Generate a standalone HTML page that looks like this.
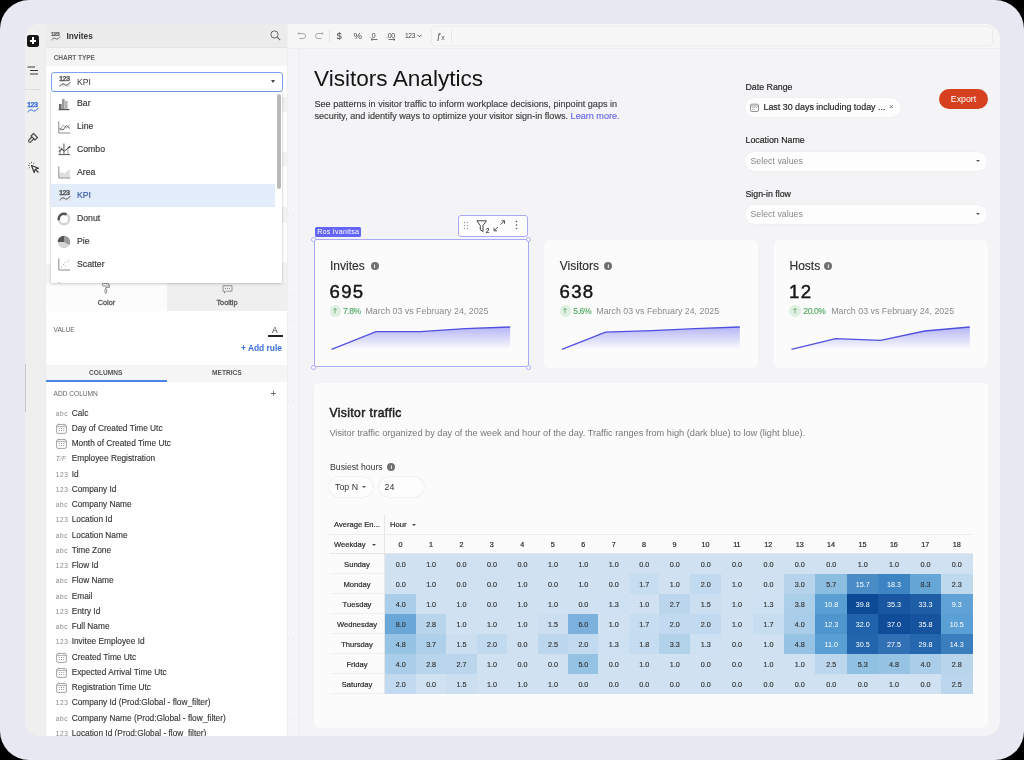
<!DOCTYPE html>
<html><head><meta charset="utf-8">
<style>
*{box-sizing:border-box;margin:0;padding:0}
html,body{width:1024px;height:760px;overflow:hidden;background:#000;font-family:"Liberation Sans",sans-serif}
.abs{position:absolute}
#outer{position:absolute;left:0;top:0;width:1024px;height:760px;background:#e8e8f3;border-radius:29px;overflow:hidden;will-change:transform}
#frame{position:absolute;left:25px;top:24px;width:975px;height:712px;border-radius:15px;overflow:hidden;background:#f4f4f7}
#inner{position:absolute;left:0;top:1px;width:975px;height:711px}
#rail{position:absolute;left:0;top:0;width:21px;height:711px;background:#efefef;border-right:1px solid #ececec}
#panel{position:absolute;left:21px;top:0;width:242px;height:711px;background:#fefefe;border-right:1px solid #efefef}
#ruler{position:absolute;left:263px;top:22px;width:11px;height:689px;background:#f5f5f7;border-right:1px solid #eeeef0;background-image:radial-gradient(circle at 5.6px 50%, #d8d8dc 0.6px, transparent 0.9px);background-size:11px 26.5px;background-position:0 -4px}
#toolbar{position:absolute;left:263px;top:0;width:712px;height:23.5px;background:#f6f6f6;border-bottom:1.5px solid #eeeeee}
.t{position:absolute;white-space:nowrap}
.sb{font-size:8.2px;color:#3a3a3a}
.ddi{position:absolute;left:0;width:231px;height:23px}
.ddi .ic{position:absolute;left:7px;top:6px;width:12px;height:11px}
.ddi .lb{position:absolute;left:26px;top:0;line-height:23px;font-size:8.7px;color:#333;-webkit-text-stroke:0.15px #333}
.colrow{position:absolute;left:9.7px;width:230px;height:15px;margin-top:0.8px}
.colrow .ci{position:absolute;left:0;top:2px;width:14px;height:11px;text-align:left;font-size:6.6px;line-height:11px}
.colrow .ct{font-size:6.6px;color:#8a8a8a;line-height:11px;letter-spacing:0.6px}
.colrow .cn{position:absolute;left:16px;top:0;line-height:15px;font-size:8.3px;color:#333;white-space:nowrap;-webkit-text-stroke:0.12px #333}
.card{position:absolute;background:#fbfbfc;border-radius:5px}
.kt{position:absolute;font-size:12px;color:#2e2e2e;-webkit-text-stroke:0.15px #2e2e2e}
.kv{position:absolute;font-size:18.6px;color:#151515;letter-spacing:1.3px;-webkit-text-stroke:0.45px #151515}
.kd{position:absolute;font-size:8.85px;color:#8a8a8a;white-space:nowrap}
.kp{position:absolute;font-size:8.6px;color:#52ab62;white-space:nowrap;letter-spacing:-0.45px;-webkit-text-stroke:0.15px #52ab62}
.up{position:absolute;width:11.5px;height:11.5px;border-radius:50%;background:#dff0e2}
.info{position:absolute;width:8px;height:8px;border-radius:50%;background:#707070;color:#fff;font-size:6px;line-height:8px;text-align:center;font-weight:bold}
.flabel{position:absolute;font-size:8.8px;color:#2a2a2a;white-space:nowrap;-webkit-text-stroke:0.2px #2a2a2a}
.fsel{position:absolute;background:#fdfdfd;border-radius:10px;box-shadow:0 0 0 0.6px #ececf0}
.cell{position:absolute;text-align:center;font-size:7.2px;-webkit-text-stroke:0.15px currentColor}
.rlab{position:absolute;left:330px;width:54px;text-align:center;font-size:7.6px;color:#2a2a2a;border-bottom:1px solid #f0f0f0;-webkit-text-stroke:0.2px #2a2a2a}
.hr{position:absolute;top:536px;height:18px;line-height:18px;text-align:center;font-size:7.2px;color:#2a2a2a;-webkit-text-stroke:0.2px #2a2a2a}
</style></head><body>
<div id="outer">
<div id="frame">
<div class="abs" style="left:0;top:0;width:21px;height:1px;background:#efefef"></div><div class="abs" style="left:21px;top:0;width:242px;height:1px;background:#ececec"></div><div class="abs" style="left:263px;top:0;width:712px;height:1px;background:#f6f6f6"></div>
<div id="inner">
  <!-- left rail -->
  <div id="rail">
    <div class="abs" style="left:2px;top:10px;width:12px;height:11.5px;background:#161616;border-radius:2.5px"></div>
    <div class="abs" style="left:4.6px;top:15px;width:6.8px;height:1.6px;background:#fff"></div>
    <div class="abs" style="left:7.2px;top:12.4px;width:1.6px;height:6.8px;background:#fff"></div>
    <svg class="abs" style="left:2px;top:41px" width="12" height="10" viewBox="0 0 12 10"><g stroke="#3a3a3a" stroke-width="1"><line x1="0.5" y1="1" x2="8" y2="1"/><line x1="3" y1="4.5" x2="11" y2="4.5"/><line x1="3" y1="8" x2="11" y2="8"/></g></svg>
    <div class="abs" style="left:0;top:64px;width:15px;height:1px;background:#dcdcdc"></div>
    <svg class="abs" style="left:2px;top:76px" width="12.0" height="12.0" viewBox="0 0 12 12"><text x="0" y="6.2" font-family="Liberation Sans" font-weight="bold" font-size="7.3" letter-spacing="-0.6" stroke-width="0.25" stroke="#3b6fe0" fill="#3b6fe0">123</text><path d="M0.5 11.2 Q2.3 9 4 8.8 Q5.2 8.8 6.5 10 Q8.5 11 11.4 7" fill="none" stroke="#3b6fe0" stroke-width="1"/></svg>
    
    <svg class="abs" style="left:2px;top:107px" width="12" height="12" viewBox="0 0 12 12"><g fill="none" stroke="#444" stroke-width="1.1"><path d="M6.5 1.5 L10.5 5.5 L8 8 L4 4 Z"/><path d="M5 5 L2 8 a1.2 1.2 0 0 0 1.8 1.8 L6.8 7"/></g></svg>
    <svg class="abs" style="left:2px;top:136px" width="13" height="13" viewBox="0 0 13 13"><g fill="none" stroke="#333" stroke-width="1.1"><path d="M4.5 4.5 L11.5 7.2 L8.3 8.3 L7.2 11.5 Z" stroke-linejoin="round"/><line x1="8.3" y1="8.3" x2="11.5" y2="11.5"/></g><g stroke="#555" stroke-width="0.8"><line x1="1" y1="4.5" x2="2.6" y2="4.5"/><line x1="4.5" y1="0.8" x2="4.5" y2="2.4"/><line x1="1.8" y1="1.8" x2="2.9" y2="2.9"/><line x1="7.2" y1="1.8" x2="6.3" y2="2.9"/><line x1="1.8" y1="7.2" x2="2.9" y2="6.3"/></g></svg>
  </div>

  <!-- side panel -->
  <div id="panel">
    <div class="abs" style="left:0;top:0;width:241px;height:23px;background:#ececec;border-bottom:1px solid #e4e4e4"></div>
    <svg class="abs" style="left:5.3px;top:6px" width="9.6" height="9.6" viewBox="0 0 12 12"><path d="M0.5 11.2 Q2.3 9 4 8.8 Q5.2 8.8 6.5 10 Q8.5 11 11.4 7 V12 H0.5 Z" fill="#e4e4e4"/><text x="0" y="6.2" font-family="Liberation Sans" font-weight="bold" font-size="7.3" letter-spacing="-0.6" stroke-width="0.25" stroke="#555" fill="#555">123</text><path d="M0.5 11.2 Q2.3 9 4 8.8 Q5.2 8.8 6.5 10 Q8.5 11 11.4 7" fill="none" stroke="#555" stroke-width="1"/></svg>
    
    <div class="t" style="left:20.5px;top:5.6px;font-size:8.3px;font-weight:bold;color:#333;line-height:10px">Invites</div>
    <svg class="abs" style="left:224px;top:5px" width="11" height="11" viewBox="0 0 11 11"><circle cx="4.5" cy="4.5" r="3.6" fill="none" stroke="#666" stroke-width="1"/><line x1="7.2" y1="7.2" x2="10.2" y2="10.2" stroke="#666" stroke-width="1.1"/></svg>
    <div class="abs" style="left:0;top:23px;width:241px;height:18px;background:#f5f5f5"></div>
    <div class="t" style="left:7.7px;top:29px;font-size:6.6px;font-weight:bold;color:#666;line-height:8px;letter-spacing:-0.1px">CHART TYPE</div>
    <!-- underlying strips visible at right edge -->
    <div class="abs" style="left:236px;top:72px;width:5px;height:15px;background:#f2f2f2"></div>
    <div class="abs" style="left:236px;top:127px;width:5px;height:14px;background:#f2f2f2"></div>
    <div class="abs" style="left:236px;top:182px;width:5px;height:16px;background:#f2f2f2"></div>
    <div class="abs" style="left:236px;top:237px;width:5px;height:22px;background:#f2f2f2"></div>
    <div class="abs" style="left:0;top:239px;width:5px;height:19px;background:#f3f3f3"></div>

    <!-- Color / Tooltip tabs -->
    <div class="abs" style="left:0;top:258px;width:121px;height:28px;background:#fcfcfc"></div>
    <div class="abs" style="left:121px;top:258px;width:120px;height:28px;background:#efefef"></div>
    <svg class="abs" style="left:56px;top:258px" width="8" height="11" viewBox="0 0 8 11"><g fill="none" stroke="#888" stroke-width="0.9"><rect x="0.5" y="0.5" width="6" height="2.5" rx="0.6"/><path d="M6.5 1.8 H7.4 V4.5 H3.8 V6"/><rect x="3" y="6" width="1.6" height="4.2" rx="0.5"/></g></svg>
    <div class="t" style="left:0px;width:121px;text-align:center;top:273px;font-size:7.3px;color:#555;line-height:9px;-webkit-text-stroke:0.3px #555">Color</div>
    <svg class="abs" style="left:176px;top:260px" width="11" height="9" viewBox="0 0 11 9"><g fill="none" stroke="#888" stroke-width="0.9"><path d="M1 0.8 H10 V6.2 H4.5 L2.5 8 V6.2 H1 Z" stroke-linejoin="round"/></g><g fill="#888"><rect x="3" y="3" width="1" height="1"/><rect x="5" y="3" width="1" height="1"/><rect x="7" y="3" width="1" height="1"/></g></svg>
    <div class="t" style="left:121px;width:120px;text-align:center;top:273px;font-size:7.3px;color:#555;line-height:9px;-webkit-text-stroke:0.3px #555">Tooltip</div>

    <div class="t" style="left:7.5px;top:300.5px;font-size:6.6px;color:#666;line-height:8px">VALUE</div>
    <div class="t" style="left:226px;top:299.5px;font-size:8.5px;color:#333;line-height:10px">A</div>
    <div class="abs" style="left:222px;top:310.3px;width:15px;height:1.3px;background:#222"></div>
    <div class="t" style="left:195px;top:317px;font-size:8.4px;font-weight:bold;color:#3a70e0;line-height:12px">+ Add rule</div>

    <!-- columns / metrics -->
    <div class="abs" style="left:0;top:340px;width:241px;height:17px;background:#f5f5f5"></div>
    <div class="abs" style="left:0;top:355px;width:121px;height:1.5px;background:#4a84ea"></div>
    <div class="t" style="left:43px;top:344px;font-size:6.6px;font-weight:bold;color:#555;line-height:8px">COLUMNS</div>
    <div class="t" style="left:166px;top:344px;font-size:6.6px;font-weight:bold;color:#555;line-height:8px">METRICS</div>
    <div class="t" style="left:7.5px;top:365px;font-size:6.6px;color:#666;line-height:8px">ADD COLUMN</div>
    <div class="t" style="left:224.5px;top:364.3px;font-size:10px;color:#666;line-height:10px">+</div>
    <div class="abs" style="left:0;top:-25px;width:241px">
<div class="colrow" style="top:404.80px"><div class="ci"><span class="ct">abc</span></div><div class="cn">Calc</div></div>
<div class="colrow" style="top:420.05px"><div class="ci"><svg width="11" height="11" viewBox="0 0 11 11"><rect x="0.6" y="1.6" width="9.8" height="8.8" rx="1.5" fill="none" stroke="#9a9a9a" stroke-width="0.9"/><line x1="0.6" y1="3.6" x2="10.4" y2="3.6" stroke="#9a9a9a" stroke-width="0.8"/><line x1="3" y1="0.5" x2="3" y2="2.2" stroke="#9a9a9a" stroke-width="0.8"/><line x1="8" y1="0.5" x2="8" y2="2.2" stroke="#9a9a9a" stroke-width="0.8"/><g fill="#9a9a9a"><rect x="2.8" y="5" width="1" height="1"/><rect x="5" y="5" width="1" height="1"/><rect x="7.2" y="5" width="1" height="1"/><rect x="2.8" y="7" width="1" height="1"/><rect x="5" y="7" width="1" height="1"/><rect x="7.2" y="7" width="1" height="1"/></g></svg></div><div class="cn">Day of Created Time Utc</div></div>
<div class="colrow" style="top:435.30px"><div class="ci"><svg width="11" height="11" viewBox="0 0 11 11"><rect x="0.6" y="1.6" width="9.8" height="8.8" rx="1.5" fill="none" stroke="#9a9a9a" stroke-width="0.9"/><line x1="0.6" y1="3.6" x2="10.4" y2="3.6" stroke="#9a9a9a" stroke-width="0.8"/><line x1="3" y1="0.5" x2="3" y2="2.2" stroke="#9a9a9a" stroke-width="0.8"/><line x1="8" y1="0.5" x2="8" y2="2.2" stroke="#9a9a9a" stroke-width="0.8"/><g fill="#9a9a9a"><rect x="2.8" y="5" width="1" height="1"/><rect x="5" y="5" width="1" height="1"/><rect x="7.2" y="5" width="1" height="1"/><rect x="2.8" y="7" width="1" height="1"/><rect x="5" y="7" width="1" height="1"/><rect x="7.2" y="7" width="1" height="1"/></g></svg></div><div class="cn">Month of Created Time Utc</div></div>
<div class="colrow" style="top:450.55px"><div class="ci"><span class="ct" style="font-style:italic">T⁄F</span></div><div class="cn">Employee Registration</div></div>
<div class="colrow" style="top:465.80px"><div class="ci"><span class="ct">123</span></div><div class="cn">Id</div></div>
<div class="colrow" style="top:481.05px"><div class="ci"><span class="ct">123</span></div><div class="cn">Company Id</div></div>
<div class="colrow" style="top:496.30px"><div class="ci"><span class="ct">abc</span></div><div class="cn">Company Name</div></div>
<div class="colrow" style="top:511.55px"><div class="ci"><span class="ct">123</span></div><div class="cn">Location Id</div></div>
<div class="colrow" style="top:526.80px"><div class="ci"><span class="ct">abc</span></div><div class="cn">Location Name</div></div>
<div class="colrow" style="top:542.05px"><div class="ci"><span class="ct">abc</span></div><div class="cn">Time Zone</div></div>
<div class="colrow" style="top:557.30px"><div class="ci"><span class="ct">123</span></div><div class="cn">Flow Id</div></div>
<div class="colrow" style="top:572.55px"><div class="ci"><span class="ct">abc</span></div><div class="cn">Flow Name</div></div>
<div class="colrow" style="top:587.80px"><div class="ci"><span class="ct">abc</span></div><div class="cn">Email</div></div>
<div class="colrow" style="top:603.05px"><div class="ci"><span class="ct">123</span></div><div class="cn">Entry Id</div></div>
<div class="colrow" style="top:618.30px"><div class="ci"><span class="ct">abc</span></div><div class="cn">Full Name</div></div>
<div class="colrow" style="top:633.55px"><div class="ci"><span class="ct">123</span></div><div class="cn">Invitee Employee Id</div></div>
<div class="colrow" style="top:648.80px"><div class="ci"><svg width="11" height="11" viewBox="0 0 11 11"><rect x="0.6" y="1.6" width="9.8" height="8.8" rx="1.5" fill="none" stroke="#9a9a9a" stroke-width="0.9"/><line x1="0.6" y1="3.6" x2="10.4" y2="3.6" stroke="#9a9a9a" stroke-width="0.8"/><line x1="3" y1="0.5" x2="3" y2="2.2" stroke="#9a9a9a" stroke-width="0.8"/><line x1="8" y1="0.5" x2="8" y2="2.2" stroke="#9a9a9a" stroke-width="0.8"/><g fill="#9a9a9a"><rect x="2.8" y="5" width="1" height="1"/><rect x="5" y="5" width="1" height="1"/><rect x="7.2" y="5" width="1" height="1"/><rect x="2.8" y="7" width="1" height="1"/><rect x="5" y="7" width="1" height="1"/><rect x="7.2" y="7" width="1" height="1"/></g></svg></div><div class="cn">Created Time Utc</div></div>
<div class="colrow" style="top:664.05px"><div class="ci"><svg width="11" height="11" viewBox="0 0 11 11"><rect x="0.6" y="1.6" width="9.8" height="8.8" rx="1.5" fill="none" stroke="#9a9a9a" stroke-width="0.9"/><line x1="0.6" y1="3.6" x2="10.4" y2="3.6" stroke="#9a9a9a" stroke-width="0.8"/><line x1="3" y1="0.5" x2="3" y2="2.2" stroke="#9a9a9a" stroke-width="0.8"/><line x1="8" y1="0.5" x2="8" y2="2.2" stroke="#9a9a9a" stroke-width="0.8"/><g fill="#9a9a9a"><rect x="2.8" y="5" width="1" height="1"/><rect x="5" y="5" width="1" height="1"/><rect x="7.2" y="5" width="1" height="1"/><rect x="2.8" y="7" width="1" height="1"/><rect x="5" y="7" width="1" height="1"/><rect x="7.2" y="7" width="1" height="1"/></g></svg></div><div class="cn">Expected Arrival Time Utc</div></div>
<div class="colrow" style="top:679.30px"><div class="ci"><svg width="11" height="11" viewBox="0 0 11 11"><rect x="0.6" y="1.6" width="9.8" height="8.8" rx="1.5" fill="none" stroke="#9a9a9a" stroke-width="0.9"/><line x1="0.6" y1="3.6" x2="10.4" y2="3.6" stroke="#9a9a9a" stroke-width="0.8"/><line x1="3" y1="0.5" x2="3" y2="2.2" stroke="#9a9a9a" stroke-width="0.8"/><line x1="8" y1="0.5" x2="8" y2="2.2" stroke="#9a9a9a" stroke-width="0.8"/><g fill="#9a9a9a"><rect x="2.8" y="5" width="1" height="1"/><rect x="5" y="5" width="1" height="1"/><rect x="7.2" y="5" width="1" height="1"/><rect x="2.8" y="7" width="1" height="1"/><rect x="5" y="7" width="1" height="1"/><rect x="7.2" y="7" width="1" height="1"/></g></svg></div><div class="cn">Registration Time Utc</div></div>
<div class="colrow" style="top:694.55px"><div class="ci"><span class="ct">123</span></div><div class="cn">Company Id (Prod:Global - flow_filter)</div></div>
<div class="colrow" style="top:709.80px"><div class="ci"><span class="ct">abc</span></div><div class="cn">Company Name (Prod:Global - flow_filter)</div></div>
<div class="colrow" style="top:725.05px"><div class="ci"><span class="ct">123</span></div><div class="cn">Location Id (Prod:Global - flow_filter)</div></div>
    </div>
  </div>

  <!-- select and dropdown (panel coords: offset 46,25) -->
  <div class="abs" style="left:26px;top:47px;width:232px;height:20px;border:1.2px solid #7aa3ee;border-radius:3px;background:#fff"></div>
  <svg class="abs" style="left:33.5px;top:50px" width="12.0" height="12.0" viewBox="0 0 12 12"><path d="M0.5 11.2 Q2.3 9 4 8.8 Q5.2 8.8 6.5 10 Q8.5 11 11.4 7 V12 H0.5 Z" fill="#e4e4e4"/><text x="0" y="6.2" font-family="Liberation Sans" font-weight="bold" font-size="7.3" letter-spacing="-0.6" stroke-width="0.25" stroke="#555" fill="#555">123</text><path d="M0.5 11.2 Q2.3 9 4 8.8 Q5.2 8.8 6.5 10 Q8.5 11 11.4 7" fill="none" stroke="#555" stroke-width="1"/></svg>
  
  <div class="t" style="left:52px;top:51px;font-size:8.6px;color:#333;line-height:12px">KPI</div>
  <div class="abs" style="left:246px;top:55px;width:0;height:0;border-left:2.8px solid transparent;border-right:2.8px solid transparent;border-top:3px solid #444"></div>

  <div class="abs" style="left:26px;top:67px;width:231px;height:191px;background:#fff;box-shadow:0 1px 3px rgba(0,0,0,0.18), 0 0 0 0.5px rgba(0,0,0,0.06);overflow:hidden">
    <div class="abs" style="left:225.5px;top:1.5px;width:4px;height:95px;border-radius:2px;background:#b9b9b9"></div>
    <div class="ddi" style="top:0px"><svg class="abs" style="left:7px;top:5.5px" width="13" height="13" viewBox="0 0 13 13"><rect x="1" y="6" width="2.6" height="5.6" fill="#6a6a6a"/><rect x="4" y="1" width="2.6" height="10.6" fill="#9a9a9a"/><rect x="7" y="3" width="2.6" height="8.6" fill="#b5b5b5"/><rect x="0.5" y="11" width="11" height="1.2" fill="#555"/></svg><div class="lb">Bar</div></div>
    <div class="ddi" style="top:23px"><svg class="abs" style="left:7px;top:5.5px" width="13" height="13" viewBox="0 0 13 13"><path d="M0.8 0.5 V12 H12.3" fill="none" stroke="#8a8a8a" stroke-width="1"/><path d="M1.5 10 L5 4 L8.5 7 L12 3.5" fill="none" stroke="#aaa" stroke-width="0.9"/><path d="M1.5 7.5 L5 9 L8.5 4.5 L12 7.5" fill="none" stroke="#555" stroke-width="0.9"/></svg><div class="lb">Line</div></div>
    <div class="ddi" style="top:46px"><svg class="abs" style="left:7px;top:5px" width="13" height="13" viewBox="0 0 13 13"><rect x="5" y="0.5" width="1.7" height="10.5" fill="#9a9a9a"/><rect x="1.2" y="6.5" width="1.6" height="4.5" fill="#b0b0b0"/><rect x="9" y="4" width="1.6" height="7" fill="#c0c0c0"/><path d="M0.8 9 L3.5 6.2 L6.5 8 L11.5 4" fill="none" stroke="#444" stroke-width="1"/><circle cx="3.5" cy="6.2" r="1" fill="#444"/><circle cx="11.5" cy="4" r="1" fill="#444"/><circle cx="1.5" cy="4.5" r="0.9" fill="#777"/><rect x="0.5" y="11" width="11.5" height="1.1" fill="#666"/></svg><div class="lb">Combo</div></div>
    <div class="ddi" style="top:69px"><svg class="abs" style="left:7px;top:5px" width="13" height="13" viewBox="0 0 13 13"><path d="M1.5 11.3 V7.5 L4 6 L6.5 7.5 L9.5 4.5 L11.8 4 V11.3 Z" fill="#dedede"/><path d="M0.8 0.5 V12 H12.3" fill="none" stroke="#8a8a8a" stroke-width="1"/></svg><div class="lb">Area</div></div>
    <div class="abs" style="left:0;top:92px;width:224px;height:23px;background:#e3ecfb"></div>
    <div class="ddi" style="top:92px"><svg class="abs" style="left:7.5px;top:5px" width="12.0" height="12.0" viewBox="0 0 12 12"><path d="M0.5 11.2 Q2.3 9 4 8.8 Q5.2 8.8 6.5 10 Q8.5 11 11.4 7 V12 H0.5 Z" fill="#e4e4e4"/><text x="0" y="6.2" font-family="Liberation Sans" font-weight="bold" font-size="7.3" letter-spacing="-0.6" stroke-width="0.25" stroke="#555" fill="#555">123</text><path d="M0.5 11.2 Q2.3 9 4 8.8 Q5.2 8.8 6.5 10 Q8.5 11 11.4 7" fill="none" stroke="#555" stroke-width="1"/></svg><div class="lb" style="color:#3a70e0">KPI</div></div>
    <div class="ddi" style="top:115px"><svg class="abs" style="left:5.5px;top:4.5px" width="14" height="14" viewBox="0 0 14 14"><circle cx="7" cy="7" r="5.2" fill="none" stroke="#d2d2d2" stroke-width="2.4"/><path d="M9.6 2.5 A5.2 5.2 0 0 0 1.9 8.2" fill="none" stroke="#555" stroke-width="2.4"/></svg><div class="lb">Donut</div></div>
    <div class="ddi" style="top:138px"><svg class="abs" style="left:5.5px;top:4.5px" width="14" height="14" viewBox="0 0 14 14"><circle cx="7" cy="7" r="6.2" fill="#d6d6d6"/><path d="M7 7 L7 0.8 A6.2 6.2 0 0 0 0.8 7 Z" fill="#555"/><path d="M7 7 L7 0.8 A6.2 6.2 0 0 1 12.4 10 Z" fill="#9a9a9a"/></svg><div class="lb">Pie</div></div>
    <div class="ddi" style="top:161px"><svg class="abs" style="left:7px;top:5px" width="13" height="13" viewBox="0 0 13 13"><path d="M0.8 0.5 V12 H12.3" fill="none" stroke="#8a8a8a" stroke-width="1"/><g fill="#aaa"><circle cx="3.5" cy="9" r="0.55"/><circle cx="5.5" cy="6.5" r="0.55"/><circle cx="7.5" cy="7.8" r="0.55"/><circle cx="9.5" cy="3.8" r="0.55"/><circle cx="11" cy="2" r="0.55"/><circle cx="6.8" cy="4.5" r="0.55"/></g></svg><div class="lb">Scatter</div></div>
    <div class="ddi" style="top:184px"><svg class="ic" viewBox="0 0 12 12"><path d="M0.5 0 V11.3" fill="none" stroke="#888" stroke-width="0.9"/><rect x="5" y="2" width="1" height="1" fill="#999"/></svg></div>
  </div>

  <!-- ruler dots -->
  <div class="abs" style="left:-0.5px;top:338.5px;width:1.3px;height:48.5px;background:#c9c9c9;border-radius:1px"></div>
  <div id="ruler"></div>

  <!-- toolbar -->
  <div id="toolbar">
    <svg class="abs" style="left:9px;top:7px" width="9" height="7" viewBox="0 0 9 7"><path d="M2 1.5 H6 A2.5 2.5 0 0 1 6 6.5 H2.5" fill="none" stroke="#aaa" stroke-width="1"/><path d="M0.3 1.5 L2.3 0 V3 Z" fill="#aaa"/></svg>
    <svg class="abs" style="left:27px;top:7px" width="9" height="7" viewBox="0 0 9 7"><path d="M7 1.5 H3 A2.5 2.5 0 0 0 3 6.5 H6.5" fill="none" stroke="#aaa" stroke-width="1"/><path d="M8.7 1.5 L6.7 0 V3 Z" fill="#aaa"/></svg>
    <div class="abs" style="left:41px;top:5px;width:1px;height:12px;background:#e3e3e3"></div>
    <div class="t" style="left:48.5px;top:5px;font-size:9.5px;color:#444;line-height:12px">$</div>
    <div class="t" style="left:65.5px;top:5px;font-size:9.5px;color:#444;line-height:12px">%</div>
    <div class="t" style="left:82px;top:5.5px;font-size:7px;color:#444;line-height:10px;letter-spacing:-0.3px">.0</div>
    <svg class="abs" style="left:82px;top:13px" width="8" height="3" viewBox="0 0 8 3"><path d="M1 1.5 H7.5 M1 1.5 L2.5 0.3 M1 1.5 L2.5 2.7" stroke="#555" stroke-width="0.8" fill="none"/></svg>
    <div class="t" style="left:98px;top:5.5px;font-size:7px;color:#444;line-height:10px;letter-spacing:-0.3px">.00</div>
    <svg class="abs" style="left:100px;top:13px" width="8" height="3" viewBox="0 0 8 3"><path d="M0.5 1.5 H7 M7 1.5 L5.5 0.3 M7 1.5 L5.5 2.7" stroke="#555" stroke-width="0.8" fill="none"/></svg>
    <div class="t" style="left:117px;top:6px;font-size:6.6px;color:#444;line-height:9px;letter-spacing:-0.3px">123</div>
    <svg class="abs" style="left:129px;top:9px" width="5" height="4" viewBox="0 0 5 4"><path d="M0.5 0.8 L2.5 2.8 L4.5 0.8" stroke="#444" stroke-width="0.9" fill="none"/></svg>
    <div class="abs" style="left:142.5px;top:0.5px;width:562.5px;height:20px;border:1px solid #ececec;border-radius:4px;background:#f7f7f7"></div>
    <div class="t" style="left:148.5px;top:5px;font-size:9.5px;color:#555;line-height:12px">ƒ</div>
    <div class="t" style="left:153.3px;top:9px;font-size:7px;color:#555;line-height:8px">x</div>
    <div class="abs" style="left:163px;top:4px;width:1px;height:14px;background:#e6e6e6"></div>
    
  </div>

  <!-- MAIN CONTENT (frame coords = page - 25) -->
  <div class="t" style="left:289px;top:41px;font-size:22.6px;color:#151515;line-height:26px">Visitors Analytics</div>
  <div class="t" style="left:289.5px;top:72.5px;font-size:9.1px;color:#3d3d3d;line-height:12.5px;-webkit-text-stroke:0.15px #3d3d3d">See patterns in visitor traffic to inform workplace decisions, pinpoint gaps in<br>security, and identify ways to optimize your visitor sign-in flows. <span style="color:#6767ee;-webkit-text-stroke:0.15px #6767ee">Learn more.</span></div>

  <!-- filters -->
  <div class="flabel" style="left:720.5px;top:56.5px;line-height:11px">Date Range</div>
  <div class="fsel" style="left:720px;top:73px;width:156px;height:19px"></div>
  <svg class="abs" style="left:725px;top:77.5px" width="9" height="9" viewBox="0 0 9 9"><rect x="0.5" y="1.2" width="8" height="7.3" rx="1.2" fill="none" stroke="#777" stroke-width="0.8"/><line x1="0.5" y1="3" x2="8.5" y2="3" stroke="#777" stroke-width="0.7"/><g fill="#888"><rect x="2.2" y="4.3" width="0.9" height="0.9"/><rect x="4.1" y="4.3" width="0.9" height="0.9"/><rect x="6" y="4.3" width="0.9" height="0.9"/><rect x="2.2" y="6.2" width="0.9" height="0.9"/><rect x="4.1" y="6.2" width="0.9" height="0.9"/></g></svg>
  <div class="flabel" style="left:738.5px;top:77.3px;line-height:11px;font-size:8.9px">Last 30 days including today ...</div>
  <div class="t" style="left:864px;top:77px;font-size:8px;color:#666;line-height:10px">×</div>
  <div class="abs" style="left:914px;top:64px;width:49px;height:20px;border-radius:10px;background:#d7401f;color:#fff;font-size:8.8px;line-height:20px;text-align:center">Export</div>

  <div class="flabel" style="left:720.5px;top:110px;line-height:11px">Location Name</div>
  <div class="fsel" style="left:720px;top:126.5px;width:242px;height:19px"></div>
  <div class="t" style="left:725.5px;top:130.5px;font-size:8.8px;color:#888;line-height:11px">Select values</div>
  <div class="abs" style="left:951px;top:134.5px;width:0;height:0;border-left:2.5px solid transparent;border-right:2.5px solid transparent;border-top:2.8px solid #555"></div>

  <div class="flabel" style="left:720.5px;top:163.5px;line-height:11px">Sign-in flow</div>
  <div class="fsel" style="left:720px;top:180px;width:242px;height:19px"></div>
  <div class="t" style="left:725.5px;top:184px;font-size:8.8px;color:#888;line-height:11px">Select values</div>
  <div class="abs" style="left:951px;top:188px;width:0;height:0;border-left:2.5px solid transparent;border-right:2.5px solid transparent;border-top:2.8px solid #555"></div>

  <!-- KPI cards -->
  <div class="card" style="left:289px;top:214.5px;width:215px;height:128px"></div>
  <div class="card" style="left:519px;top:214.5px;width:214px;height:128px"></div>
  <div class="card" style="left:748.5px;top:214.5px;width:214.5px;height:128px"></div>

  <!-- Invites card content -->
  <div class="kt" style="left:305px;top:234px;line-height:14px">Invites</div>
  <div class="info" style="left:345.5px;top:237px">i</div>
  <div class="kv" style="left:304.5px;top:256.1px;line-height:22px">695</div>
  <div class="up" style="left:304.5px;top:280px"></div>
  <svg class="abs" style="left:307px;top:282px" width="6" height="7" viewBox="0 0 6 7"><path d="M3 6.3 V1.3 M1.3 3 L3 1.3 L4.7 3" stroke="#55a463" stroke-width="0.8" fill="none"/></svg>
  <div class="kp" style="left:318px;top:280.5px;line-height:10px">7.8%</div>
  <div class="kd" style="left:340.5px;top:280.5px;line-height:10px">March 03 vs February 24, 2025</div>

  <div class="kt" style="left:534.8px;top:234px;line-height:14px">Visitors</div>
  <div class="info" style="left:579.3px;top:237px">i</div>
  <div class="kv" style="left:534.5px;top:256.1px;line-height:22px">638</div>
  <div class="up" style="left:534.5px;top:280px"></div>
  <svg class="abs" style="left:537px;top:282px" width="6" height="7" viewBox="0 0 6 7"><path d="M3 6.3 V1.3 M1.3 3 L3 1.3 L4.7 3" stroke="#55a463" stroke-width="0.8" fill="none"/></svg>
  <div class="kp" style="left:548.3px;top:280.5px;line-height:10px">5.6%</div>
  <div class="kd" style="left:571.3px;top:280.5px;line-height:10px">March 03 vs February 24, 2025</div>

  <div class="kt" style="left:764.5px;top:234px;line-height:14px">Hosts</div>
  <div class="info" style="left:799.4px;top:237px">i</div>
  <div class="kv" style="left:764px;top:256.1px;line-height:22px">12</div>
  <div class="up" style="left:764.2px;top:280px"></div>
  <svg class="abs" style="left:766.7px;top:282px" width="6" height="7" viewBox="0 0 6 7"><path d="M3 6.3 V1.3 M1.3 3 L3 1.3 L4.7 3" stroke="#55a463" stroke-width="0.8" fill="none"/></svg>
  <div class="kp" style="left:778.3px;top:280.5px;line-height:10px">20.0%</div>
  <div class="kd" style="left:806.2px;top:280.5px;line-height:10px">March 03 vs February 24, 2025</div>

  <!-- sparklines (frame coords) -->
  <svg class="abs" style="left:0;top:0" width="975" height="711" viewBox="0 0 975 711">
    <defs><linearGradient id="gr" x1="0" y1="0" x2="0" y2="1"><stop offset="0" stop-color="#7c7cf0" stop-opacity="0.55"/><stop offset="1" stop-color="#7c7cf0" stop-opacity="0"/></linearGradient></defs>
    <path d="M306.6 324.3 L351 306.7 L395.3 306.7 L440.2 303.6 L485.2 302 V324.3 H306.6 Z" fill="url(#gr)"/>
    <path d="M306.6 324.3 L351 306.7 L395.3 306.7 L440.2 303.6 L485.2 302" fill="none" stroke="#5050e0" stroke-width="1.3"/>
    <path d="M536.9 324.3 L580.5 307.1 L626.7 305.6 L670 303.6 L714.8 302 V324.3 H536.9 Z" fill="url(#gr)"/>
    <path d="M536.9 324.3 L580.5 307.1 L626.7 305.6 L670 303.6 L714.8 302" fill="none" stroke="#5050e0" stroke-width="1.3"/>
    <path d="M766.5 324.3 L810.5 313.6 L855.7 315.3 L899.7 306 L944.8 302 V324.3 H766.5 Z" fill="url(#gr)"/>
    <path d="M766.5 324.3 L810.5 313.6 L855.7 315.3 L899.7 306 L944.8 302" fill="none" stroke="#5050e0" stroke-width="1.3"/>
  </svg>

  <!-- selection around Invites -->
  <div class="abs" style="left:288.5px;top:214.2px;width:215.5px;height:128.3px;border:1px solid #a9a9f7"></div>
  <div class="abs" style="left:286.2px;top:212px;width:5px;height:5px;border-radius:50%;background:#fff;border:1px solid #a9a9f7"></div>
  <div class="abs" style="left:501.2px;top:212px;width:5px;height:5px;border-radius:50%;background:#fff;border:1px solid #a9a9f7"></div>
  <div class="abs" style="left:286.2px;top:340px;width:5px;height:5px;border-radius:50%;background:#fff;border:1px solid #a9a9f7"></div>
  <div class="abs" style="left:501.2px;top:340px;width:5px;height:5px;border-radius:50%;background:#fff;border:1px solid #a9a9f7"></div>
  <div class="abs" style="left:289.7px;top:202.3px;width:46px;height:9.7px;background:#6464f6;border-radius:1.5px;color:#fff;font-size:7.1px;line-height:10px;padding-left:2.5px;letter-spacing:0.25px;white-space:nowrap">Ros Ivanitsa</div>
  <div class="abs" style="left:433px;top:190px;width:69.5px;height:21.5px;border:1px solid #a9a9f7;border-radius:3px;background:#fdfdfe"></div>
  <svg class="abs" style="left:438px;top:196px" width="6" height="9" viewBox="0 0 6 9"><g fill="#9a9a9a"><circle cx="1.5" cy="1.5" r="0.7"/><circle cx="4.5" cy="1.5" r="0.7"/><circle cx="1.5" cy="4.5" r="0.7"/><circle cx="4.5" cy="4.5" r="0.7"/><circle cx="1.5" cy="7.5" r="0.7"/><circle cx="4.5" cy="7.5" r="0.7"/></g></svg>
  <svg class="abs" style="left:450.5px;top:195.3px" width="16" height="13" viewBox="0 0 16 13"><path d="M0.8 0.8 H10.5 L7 5.5 V11.5 L4.3 9.8 V5.5 Z" fill="none" stroke="#444" stroke-width="1" stroke-linejoin="round"/><text x="9.8" y="12.5" font-size="6.5" font-family="Liberation Sans" font-weight="bold" fill="#444">2</text></svg>
  <svg class="abs" style="left:468px;top:195px" width="13" height="12" viewBox="0 0 13 12"><g fill="none" stroke="#444" stroke-width="0.9"><path d="M7.5 4.5 L11.5 0.8 M8.5 0.8 H11.5 V3.8"/><path d="M5 7 L1 10.8 M1 7.8 V10.8 H4"/></g></svg>
  <svg class="abs" style="left:490px;top:195px" width="3" height="10" viewBox="0 0 3 10"><g fill="#555"><circle cx="1.5" cy="1.5" r="0.8"/><circle cx="1.5" cy="5" r="0.8"/><circle cx="1.5" cy="8.5" r="0.8"/></g></svg>

  <!-- heatmap card -->
  <div class="card" style="left:289px;top:358px;width:674px;height:345px"></div>
  <div class="t" style="left:304.4px;top:380.5px;font-size:12.1px;color:#222;line-height:14px;letter-spacing:0.42px;-webkit-text-stroke:0.5px #222">Visitor traffic</div>
  <div class="t" style="left:304.4px;top:402.5px;font-size:9.2px;color:#777;line-height:11px">Visitor traffic organized by day of the week and hour of the day. Traffic ranges from high (dark blue) to low (light blue).</div>
  <div class="t" style="left:305px;top:436.5px;font-size:8.7px;color:#333;line-height:11px">Busiest hours</div>
  <div class="info" style="left:362.3px;top:437.8px">i</div>
  <div class="fsel" style="left:304px;top:452px;width:44.4px;height:19.5px"></div>
  <div class="t" style="left:310px;top:456.5px;font-size:8.8px;color:#333;line-height:11px">Top N</div>
  <div class="abs" style="left:336.5px;top:460.5px;width:0;height:0;border-left:2.2px solid transparent;border-right:2.2px solid transparent;border-top:2.5px solid #555"></div>
  <div class="fsel" style="left:353.8px;top:452px;width:45px;height:19.5px"></div>
  <div class="t" style="left:359.5px;top:456.5px;font-size:8.8px;color:#333;line-height:11px">24</div>

  <div class="abs" style="left:-25px;top:-25px;width:1024px;height:760px">
    <!-- table header (page coords) -->
    <div class="abs" style="left:384px;top:515px;width:1.3px;height:179px;background:#e6e6e6"></div>
    <div class="abs" style="left:329px;top:534px;width:644px;height:1px;background:#ededed"></div>
    <div class="abs" style="left:330px;top:553.2px;width:643px;height:1px;background:#e6e6e6"></div>
    <div class="t" style="left:334px;top:519.5px;font-size:7.6px;color:#2a2a2a;line-height:10px;-webkit-text-stroke:0.2px #2a2a2a">Average En...</div>
    <div class="t" style="left:390px;top:519.5px;font-size:7.6px;color:#2a2a2a;line-height:10px;-webkit-text-stroke:0.2px #2a2a2a">Hour</div>
    <div class="abs" style="left:412px;top:523.5px;width:0;height:0;border-left:2.2px solid transparent;border-right:2.2px solid transparent;border-top:2.5px solid #444"></div>
    <div class="t" style="left:334px;top:539.5px;font-size:7.6px;color:#2a2a2a;line-height:10px;-webkit-text-stroke:0.2px #2a2a2a">Weekday</div>
    <div class="abs" style="left:372px;top:543.5px;width:0;height:0;border-left:2.2px solid transparent;border-right:2.2px solid transparent;border-top:2.5px solid #444"></div>
<div class="hr" style="left:385.30px;width:30.45px">0</div>
<div class="hr" style="left:415.75px;width:30.45px">1</div>
<div class="hr" style="left:446.20px;width:30.45px">2</div>
<div class="hr" style="left:476.65px;width:30.45px">3</div>
<div class="hr" style="left:507.10px;width:30.45px">4</div>
<div class="hr" style="left:537.55px;width:30.45px">5</div>
<div class="hr" style="left:568.00px;width:30.45px">6</div>
<div class="hr" style="left:598.45px;width:30.45px">7</div>
<div class="hr" style="left:628.90px;width:30.45px">8</div>
<div class="hr" style="left:659.35px;width:30.45px">9</div>
<div class="hr" style="left:689.80px;width:31.40px">10</div>
<div class="hr" style="left:721.20px;width:31.40px">11</div>
<div class="hr" style="left:752.60px;width:31.40px">12</div>
<div class="hr" style="left:784.00px;width:31.40px">13</div>
<div class="hr" style="left:815.40px;width:31.40px">14</div>
<div class="hr" style="left:846.80px;width:31.40px">15</div>
<div class="hr" style="left:878.20px;width:31.40px">16</div>
<div class="hr" style="left:909.60px;width:31.40px">17</div>
<div class="hr" style="left:941.00px;width:31.40px">18</div>
<div class="rlab" style="top:553.90px;height:20.02px;line-height:21.52px">Sunday</div>
<div class="cell" style="left:385.30px;top:553.90px;width:30.75px;height:20.32px;line-height:21.42px;background:#d0e2f2;color:#333333">0.0</div>
<div class="cell" style="left:415.75px;top:553.90px;width:30.75px;height:20.32px;line-height:21.42px;background:#d0e2f2;color:#333333">1.0</div>
<div class="cell" style="left:446.20px;top:553.90px;width:30.75px;height:20.32px;line-height:21.42px;background:#d0e2f2;color:#333333">0.0</div>
<div class="cell" style="left:476.65px;top:553.90px;width:30.75px;height:20.32px;line-height:21.42px;background:#d0e2f2;color:#333333">0.0</div>
<div class="cell" style="left:507.10px;top:553.90px;width:30.75px;height:20.32px;line-height:21.42px;background:#d0e2f2;color:#333333">0.0</div>
<div class="cell" style="left:537.55px;top:553.90px;width:30.75px;height:20.32px;line-height:21.42px;background:#d0e2f2;color:#333333">1.0</div>
<div class="cell" style="left:568.00px;top:553.90px;width:30.75px;height:20.32px;line-height:21.42px;background:#d0e2f2;color:#333333">1.0</div>
<div class="cell" style="left:598.45px;top:553.90px;width:30.75px;height:20.32px;line-height:21.42px;background:#d0e2f2;color:#333333">1.0</div>
<div class="cell" style="left:628.90px;top:553.90px;width:30.75px;height:20.32px;line-height:21.42px;background:#d0e2f2;color:#333333">0.0</div>
<div class="cell" style="left:659.35px;top:553.90px;width:30.75px;height:20.32px;line-height:21.42px;background:#d0e2f2;color:#333333">0.0</div>
<div class="cell" style="left:689.80px;top:553.90px;width:31.70px;height:20.32px;line-height:21.42px;background:#d0e2f2;color:#333333">0.0</div>
<div class="cell" style="left:721.20px;top:553.90px;width:31.70px;height:20.32px;line-height:21.42px;background:#d0e2f2;color:#333333">0.0</div>
<div class="cell" style="left:752.60px;top:553.90px;width:31.70px;height:20.32px;line-height:21.42px;background:#d0e2f2;color:#333333">0.0</div>
<div class="cell" style="left:784.00px;top:553.90px;width:31.70px;height:20.32px;line-height:21.42px;background:#d0e2f2;color:#333333">0.0</div>
<div class="cell" style="left:815.40px;top:553.90px;width:31.70px;height:20.32px;line-height:21.42px;background:#d0e2f2;color:#333333">0.0</div>
<div class="cell" style="left:846.80px;top:553.90px;width:31.70px;height:20.32px;line-height:21.42px;background:#d0e2f2;color:#333333">1.0</div>
<div class="cell" style="left:878.20px;top:553.90px;width:31.70px;height:20.32px;line-height:21.42px;background:#d0e2f2;color:#333333">1.0</div>
<div class="cell" style="left:909.60px;top:553.90px;width:31.70px;height:20.32px;line-height:21.42px;background:#d0e2f2;color:#333333">0.0</div>
<div class="cell" style="left:941.00px;top:553.90px;width:31.70px;height:20.32px;line-height:21.42px;background:#d0e2f2;color:#333333">0.0</div>
<div class="rlab" style="top:573.92px;height:20.02px;line-height:21.52px">Monday</div>
<div class="cell" style="left:385.30px;top:573.92px;width:30.75px;height:20.32px;line-height:21.42px;background:#d0e2f2;color:#333333">0.0</div>
<div class="cell" style="left:415.75px;top:573.92px;width:30.75px;height:20.32px;line-height:21.42px;background:#d0e2f2;color:#333333">1.0</div>
<div class="cell" style="left:446.20px;top:573.92px;width:30.75px;height:20.32px;line-height:21.42px;background:#d0e2f2;color:#333333">0.0</div>
<div class="cell" style="left:476.65px;top:573.92px;width:30.75px;height:20.32px;line-height:21.42px;background:#d0e2f2;color:#333333">0.0</div>
<div class="cell" style="left:507.10px;top:573.92px;width:30.75px;height:20.32px;line-height:21.42px;background:#d0e2f2;color:#333333">1.0</div>
<div class="cell" style="left:537.55px;top:573.92px;width:30.75px;height:20.32px;line-height:21.42px;background:#d0e2f2;color:#333333">0.0</div>
<div class="cell" style="left:568.00px;top:573.92px;width:30.75px;height:20.32px;line-height:21.42px;background:#d0e2f2;color:#333333">1.0</div>
<div class="cell" style="left:598.45px;top:573.92px;width:30.75px;height:20.32px;line-height:21.42px;background:#d0e2f2;color:#333333">0.0</div>
<div class="cell" style="left:628.90px;top:573.92px;width:30.75px;height:20.32px;line-height:21.42px;background:#c7ddf0;color:#333333">1.7</div>
<div class="cell" style="left:659.35px;top:573.92px;width:30.75px;height:20.32px;line-height:21.42px;background:#d0e2f2;color:#333333">1.0</div>
<div class="cell" style="left:689.80px;top:573.92px;width:31.70px;height:20.32px;line-height:21.42px;background:#c2daef;color:#333333">2.0</div>
<div class="cell" style="left:721.20px;top:573.92px;width:31.70px;height:20.32px;line-height:21.42px;background:#d0e2f2;color:#333333">1.0</div>
<div class="cell" style="left:752.60px;top:573.92px;width:31.70px;height:20.32px;line-height:21.42px;background:#d0e2f2;color:#333333">0.0</div>
<div class="cell" style="left:784.00px;top:573.92px;width:31.70px;height:20.32px;line-height:21.42px;background:#b6d3eb;color:#333333">3.0</div>
<div class="cell" style="left:815.40px;top:573.92px;width:31.70px;height:20.32px;line-height:21.42px;background:#8bbde1;color:#333333">5.7</div>
<div class="cell" style="left:846.80px;top:573.92px;width:31.70px;height:20.32px;line-height:21.42px;background:#4a8cc6;color:#ffffff;-webkit-text-stroke:0">15.7</div>
<div class="cell" style="left:878.20px;top:573.92px;width:31.70px;height:20.32px;line-height:21.42px;background:#3d84c2;color:#ffffff;-webkit-text-stroke:0">18.3</div>
<div class="cell" style="left:909.60px;top:573.92px;width:31.70px;height:20.32px;line-height:21.42px;background:#65a6d6;color:#333333">8.3</div>
<div class="cell" style="left:941.00px;top:573.92px;width:31.70px;height:20.32px;line-height:21.42px;background:#bed8ee;color:#333333">2.3</div>
<div class="rlab" style="top:593.94px;height:20.02px;line-height:21.52px">Tuesday</div>
<div class="cell" style="left:385.30px;top:593.94px;width:30.75px;height:20.32px;line-height:21.42px;background:#aacee9;color:#333333">4.0</div>
<div class="cell" style="left:415.75px;top:593.94px;width:30.75px;height:20.32px;line-height:21.42px;background:#d0e2f2;color:#333333">1.0</div>
<div class="cell" style="left:446.20px;top:593.94px;width:30.75px;height:20.32px;line-height:21.42px;background:#d0e2f2;color:#333333">1.0</div>
<div class="cell" style="left:476.65px;top:593.94px;width:30.75px;height:20.32px;line-height:21.42px;background:#d0e2f2;color:#333333">0.0</div>
<div class="cell" style="left:507.10px;top:593.94px;width:30.75px;height:20.32px;line-height:21.42px;background:#d0e2f2;color:#333333">1.0</div>
<div class="cell" style="left:537.55px;top:593.94px;width:30.75px;height:20.32px;line-height:21.42px;background:#d0e2f2;color:#333333">1.0</div>
<div class="cell" style="left:568.00px;top:593.94px;width:30.75px;height:20.32px;line-height:21.42px;background:#d0e2f2;color:#333333">0.0</div>
<div class="cell" style="left:598.45px;top:593.94px;width:30.75px;height:20.32px;line-height:21.42px;background:#cee1f2;color:#333333">1.3</div>
<div class="cell" style="left:628.90px;top:593.94px;width:30.75px;height:20.32px;line-height:21.42px;background:#d0e2f2;color:#333333">1.0</div>
<div class="cell" style="left:659.35px;top:593.94px;width:30.75px;height:20.32px;line-height:21.42px;background:#bad5ec;color:#333333">2.7</div>
<div class="cell" style="left:689.80px;top:593.94px;width:31.70px;height:20.32px;line-height:21.42px;background:#cbdff1;color:#333333">1.5</div>
<div class="cell" style="left:721.20px;top:593.94px;width:31.70px;height:20.32px;line-height:21.42px;background:#d0e2f2;color:#333333">1.0</div>
<div class="cell" style="left:752.60px;top:593.94px;width:31.70px;height:20.32px;line-height:21.42px;background:#cee1f2;color:#333333">1.3</div>
<div class="cell" style="left:784.00px;top:593.94px;width:31.70px;height:20.32px;line-height:21.42px;background:#accfe9;color:#333333">3.8</div>
<div class="cell" style="left:815.40px;top:593.94px;width:31.70px;height:20.32px;line-height:21.42px;background:#5a9fd3;color:#ffffff;-webkit-text-stroke:0">10.8</div>
<div class="cell" style="left:846.80px;top:593.94px;width:31.70px;height:20.32px;line-height:21.42px;background:#0d4a96;color:#ffffff;-webkit-text-stroke:0">39.8</div>
<div class="cell" style="left:878.20px;top:593.94px;width:31.70px;height:20.32px;line-height:21.42px;background:#1856a1;color:#ffffff;-webkit-text-stroke:0">35.3</div>
<div class="cell" style="left:909.60px;top:593.94px;width:31.70px;height:20.32px;line-height:21.42px;background:#1d5ea7;color:#ffffff;-webkit-text-stroke:0">33.3</div>
<div class="cell" style="left:941.00px;top:593.94px;width:31.70px;height:20.32px;line-height:21.42px;background:#60a2d5;color:#ffffff;-webkit-text-stroke:0">9.3</div>
<div class="rlab" style="top:613.96px;height:20.02px;line-height:21.52px">Wednesday</div>
<div class="cell" style="left:385.30px;top:613.96px;width:30.75px;height:20.32px;line-height:21.42px;background:#68a7d7;color:#333333">8.0</div>
<div class="cell" style="left:415.75px;top:613.96px;width:30.75px;height:20.32px;line-height:21.42px;background:#b8d5ec;color:#333333">2.8</div>
<div class="cell" style="left:446.20px;top:613.96px;width:30.75px;height:20.32px;line-height:21.42px;background:#d0e2f2;color:#333333">1.0</div>
<div class="cell" style="left:476.65px;top:613.96px;width:30.75px;height:20.32px;line-height:21.42px;background:#d0e2f2;color:#333333">1.0</div>
<div class="cell" style="left:507.10px;top:613.96px;width:30.75px;height:20.32px;line-height:21.42px;background:#d0e2f2;color:#333333">1.0</div>
<div class="cell" style="left:537.55px;top:613.96px;width:30.75px;height:20.32px;line-height:21.42px;background:#cbdff1;color:#333333">1.5</div>
<div class="cell" style="left:568.00px;top:613.96px;width:30.75px;height:20.32px;line-height:21.42px;background:#7bb1dc;color:#333333">6.0</div>
<div class="cell" style="left:598.45px;top:613.96px;width:30.75px;height:20.32px;line-height:21.42px;background:#d0e2f2;color:#333333">1.0</div>
<div class="cell" style="left:628.90px;top:613.96px;width:30.75px;height:20.32px;line-height:21.42px;background:#c7ddf0;color:#333333">1.7</div>
<div class="cell" style="left:659.35px;top:613.96px;width:30.75px;height:20.32px;line-height:21.42px;background:#c2daef;color:#333333">2.0</div>
<div class="cell" style="left:689.80px;top:613.96px;width:31.70px;height:20.32px;line-height:21.42px;background:#c2daef;color:#333333">2.0</div>
<div class="cell" style="left:721.20px;top:613.96px;width:31.70px;height:20.32px;line-height:21.42px;background:#d0e2f2;color:#333333">1.0</div>
<div class="cell" style="left:752.60px;top:613.96px;width:31.70px;height:20.32px;line-height:21.42px;background:#c7ddf0;color:#333333">1.7</div>
<div class="cell" style="left:784.00px;top:613.96px;width:31.70px;height:20.32px;line-height:21.42px;background:#aacee9;color:#333333">4.0</div>
<div class="cell" style="left:815.40px;top:613.96px;width:31.70px;height:20.32px;line-height:21.42px;background:#4f95ce;color:#ffffff;-webkit-text-stroke:0">12.3</div>
<div class="cell" style="left:846.80px;top:613.96px;width:31.70px;height:20.32px;line-height:21.42px;background:#2062ab;color:#ffffff;-webkit-text-stroke:0">32.0</div>
<div class="cell" style="left:878.20px;top:613.96px;width:31.70px;height:20.32px;line-height:21.42px;background:#0f4c99;color:#ffffff;-webkit-text-stroke:0">37.0</div>
<div class="cell" style="left:909.60px;top:613.96px;width:31.70px;height:20.32px;line-height:21.42px;background:#16539e;color:#ffffff;-webkit-text-stroke:0">35.8</div>
<div class="cell" style="left:941.00px;top:613.96px;width:31.70px;height:20.32px;line-height:21.42px;background:#5ba0d4;color:#ffffff;-webkit-text-stroke:0">10.5</div>
<div class="rlab" style="top:633.98px;height:20.02px;line-height:21.52px">Thursday</div>
<div class="cell" style="left:385.30px;top:633.98px;width:30.75px;height:20.32px;line-height:21.42px;background:#96c3e4;color:#333333">4.8</div>
<div class="cell" style="left:415.75px;top:633.98px;width:30.75px;height:20.32px;line-height:21.42px;background:#aed0ea;color:#333333">3.7</div>
<div class="cell" style="left:446.20px;top:633.98px;width:30.75px;height:20.32px;line-height:21.42px;background:#cbdff1;color:#333333">1.5</div>
<div class="cell" style="left:476.65px;top:633.98px;width:30.75px;height:20.32px;line-height:21.42px;background:#c2daef;color:#333333">2.0</div>
<div class="cell" style="left:507.10px;top:633.98px;width:30.75px;height:20.32px;line-height:21.42px;background:#d0e2f2;color:#333333">0.0</div>
<div class="cell" style="left:537.55px;top:633.98px;width:30.75px;height:20.32px;line-height:21.42px;background:#bcd7ed;color:#333333">2.5</div>
<div class="cell" style="left:568.00px;top:633.98px;width:30.75px;height:20.32px;line-height:21.42px;background:#c2daef;color:#333333">2.0</div>
<div class="cell" style="left:598.45px;top:633.98px;width:30.75px;height:20.32px;line-height:21.42px;background:#cee1f2;color:#333333">1.3</div>
<div class="cell" style="left:628.90px;top:633.98px;width:30.75px;height:20.32px;line-height:21.42px;background:#c6dcf0;color:#333333">1.8</div>
<div class="cell" style="left:659.35px;top:633.98px;width:30.75px;height:20.32px;line-height:21.42px;background:#b2d2ea;color:#333333">3.3</div>
<div class="cell" style="left:689.80px;top:633.98px;width:31.70px;height:20.32px;line-height:21.42px;background:#cee1f2;color:#333333">1.3</div>
<div class="cell" style="left:721.20px;top:633.98px;width:31.70px;height:20.32px;line-height:21.42px;background:#d0e2f2;color:#333333">0.0</div>
<div class="cell" style="left:752.60px;top:633.98px;width:31.70px;height:20.32px;line-height:21.42px;background:#d0e2f2;color:#333333">1.0</div>
<div class="cell" style="left:784.00px;top:633.98px;width:31.70px;height:20.32px;line-height:21.42px;background:#96c3e4;color:#333333">4.8</div>
<div class="cell" style="left:815.40px;top:633.98px;width:31.70px;height:20.32px;line-height:21.42px;background:#5a9fd3;color:#ffffff;-webkit-text-stroke:0">11.0</div>
<div class="cell" style="left:846.80px;top:633.98px;width:31.70px;height:20.32px;line-height:21.42px;background:#2365ac;color:#ffffff;-webkit-text-stroke:0">30.5</div>
<div class="cell" style="left:878.20px;top:633.98px;width:31.70px;height:20.32px;line-height:21.42px;background:#3170b4;color:#ffffff;-webkit-text-stroke:0">27.5</div>
<div class="cell" style="left:909.60px;top:633.98px;width:31.70px;height:20.32px;line-height:21.42px;background:#2567ae;color:#ffffff;-webkit-text-stroke:0">29.8</div>
<div class="cell" style="left:941.00px;top:633.98px;width:31.70px;height:20.32px;line-height:21.42px;background:#3a7ebe;color:#ffffff;-webkit-text-stroke:0">14.3</div>
<div class="rlab" style="top:654.00px;height:20.02px;line-height:21.52px">Friday</div>
<div class="cell" style="left:385.30px;top:654.00px;width:30.75px;height:20.32px;line-height:21.42px;background:#aacee9;color:#333333">4.0</div>
<div class="cell" style="left:415.75px;top:654.00px;width:30.75px;height:20.32px;line-height:21.42px;background:#b8d5ec;color:#333333">2.8</div>
<div class="cell" style="left:446.20px;top:654.00px;width:30.75px;height:20.32px;line-height:21.42px;background:#bad5ec;color:#333333">2.7</div>
<div class="cell" style="left:476.65px;top:654.00px;width:30.75px;height:20.32px;line-height:21.42px;background:#d0e2f2;color:#333333">1.0</div>
<div class="cell" style="left:507.10px;top:654.00px;width:30.75px;height:20.32px;line-height:21.42px;background:#d0e2f2;color:#333333">0.0</div>
<div class="cell" style="left:537.55px;top:654.00px;width:30.75px;height:20.32px;line-height:21.42px;background:#d0e2f2;color:#333333">0.0</div>
<div class="cell" style="left:568.00px;top:654.00px;width:30.75px;height:20.32px;line-height:21.42px;background:#94c2e3;color:#333333">5.0</div>
<div class="cell" style="left:598.45px;top:654.00px;width:30.75px;height:20.32px;line-height:21.42px;background:#d0e2f2;color:#333333">0.0</div>
<div class="cell" style="left:628.90px;top:654.00px;width:30.75px;height:20.32px;line-height:21.42px;background:#d0e2f2;color:#333333">1.0</div>
<div class="cell" style="left:659.35px;top:654.00px;width:30.75px;height:20.32px;line-height:21.42px;background:#d0e2f2;color:#333333">1.0</div>
<div class="cell" style="left:689.80px;top:654.00px;width:31.70px;height:20.32px;line-height:21.42px;background:#d0e2f2;color:#333333">0.0</div>
<div class="cell" style="left:721.20px;top:654.00px;width:31.70px;height:20.32px;line-height:21.42px;background:#d0e2f2;color:#333333">0.0</div>
<div class="cell" style="left:752.60px;top:654.00px;width:31.70px;height:20.32px;line-height:21.42px;background:#d0e2f2;color:#333333">1.0</div>
<div class="cell" style="left:784.00px;top:654.00px;width:31.70px;height:20.32px;line-height:21.42px;background:#d0e2f2;color:#333333">1.0</div>
<div class="cell" style="left:815.40px;top:654.00px;width:31.70px;height:20.32px;line-height:21.42px;background:#bcd7ed;color:#333333">2.5</div>
<div class="cell" style="left:846.80px;top:654.00px;width:31.70px;height:20.32px;line-height:21.42px;background:#90c0e2;color:#333333">5.3</div>
<div class="cell" style="left:878.20px;top:654.00px;width:31.70px;height:20.32px;line-height:21.42px;background:#96c3e4;color:#333333">4.8</div>
<div class="cell" style="left:909.60px;top:654.00px;width:31.70px;height:20.32px;line-height:21.42px;background:#aacee9;color:#333333">4.0</div>
<div class="cell" style="left:941.00px;top:654.00px;width:31.70px;height:20.32px;line-height:21.42px;background:#b8d5ec;color:#333333">2.8</div>
<div class="rlab" style="top:674.02px;height:20.02px;line-height:21.52px">Saturday</div>
<div class="cell" style="left:385.30px;top:674.02px;width:30.75px;height:20.32px;line-height:21.42px;background:#c2daef;color:#333333">2.0</div>
<div class="cell" style="left:415.75px;top:674.02px;width:30.75px;height:20.32px;line-height:21.42px;background:#d0e2f2;color:#333333">0.0</div>
<div class="cell" style="left:446.20px;top:674.02px;width:30.75px;height:20.32px;line-height:21.42px;background:#cbdff1;color:#333333">1.5</div>
<div class="cell" style="left:476.65px;top:674.02px;width:30.75px;height:20.32px;line-height:21.42px;background:#d0e2f2;color:#333333">1.0</div>
<div class="cell" style="left:507.10px;top:674.02px;width:30.75px;height:20.32px;line-height:21.42px;background:#d0e2f2;color:#333333">1.0</div>
<div class="cell" style="left:537.55px;top:674.02px;width:30.75px;height:20.32px;line-height:21.42px;background:#d0e2f2;color:#333333">1.0</div>
<div class="cell" style="left:568.00px;top:674.02px;width:30.75px;height:20.32px;line-height:21.42px;background:#d0e2f2;color:#333333">0.0</div>
<div class="cell" style="left:598.45px;top:674.02px;width:30.75px;height:20.32px;line-height:21.42px;background:#d0e2f2;color:#333333">0.0</div>
<div class="cell" style="left:628.90px;top:674.02px;width:30.75px;height:20.32px;line-height:21.42px;background:#d0e2f2;color:#333333">0.0</div>
<div class="cell" style="left:659.35px;top:674.02px;width:30.75px;height:20.32px;line-height:21.42px;background:#d0e2f2;color:#333333">0.0</div>
<div class="cell" style="left:689.80px;top:674.02px;width:31.70px;height:20.32px;line-height:21.42px;background:#d0e2f2;color:#333333">0.0</div>
<div class="cell" style="left:721.20px;top:674.02px;width:31.70px;height:20.32px;line-height:21.42px;background:#d0e2f2;color:#333333">0.0</div>
<div class="cell" style="left:752.60px;top:674.02px;width:31.70px;height:20.32px;line-height:21.42px;background:#d0e2f2;color:#333333">0.0</div>
<div class="cell" style="left:784.00px;top:674.02px;width:31.70px;height:20.32px;line-height:21.42px;background:#d0e2f2;color:#333333">0.0</div>
<div class="cell" style="left:815.40px;top:674.02px;width:31.70px;height:20.32px;line-height:21.42px;background:#d0e2f2;color:#333333">0.0</div>
<div class="cell" style="left:846.80px;top:674.02px;width:31.70px;height:20.32px;line-height:21.42px;background:#d0e2f2;color:#333333">0.0</div>
<div class="cell" style="left:878.20px;top:674.02px;width:31.70px;height:20.32px;line-height:21.42px;background:#d0e2f2;color:#333333">1.0</div>
<div class="cell" style="left:909.60px;top:674.02px;width:31.70px;height:20.32px;line-height:21.42px;background:#d0e2f2;color:#333333">0.0</div>
<div class="cell" style="left:941.00px;top:674.02px;width:31.70px;height:20.32px;line-height:21.42px;background:#bcd7ed;color:#333333">2.5</div>
  </div>
</div>
</div>
</div>
</body></html>
